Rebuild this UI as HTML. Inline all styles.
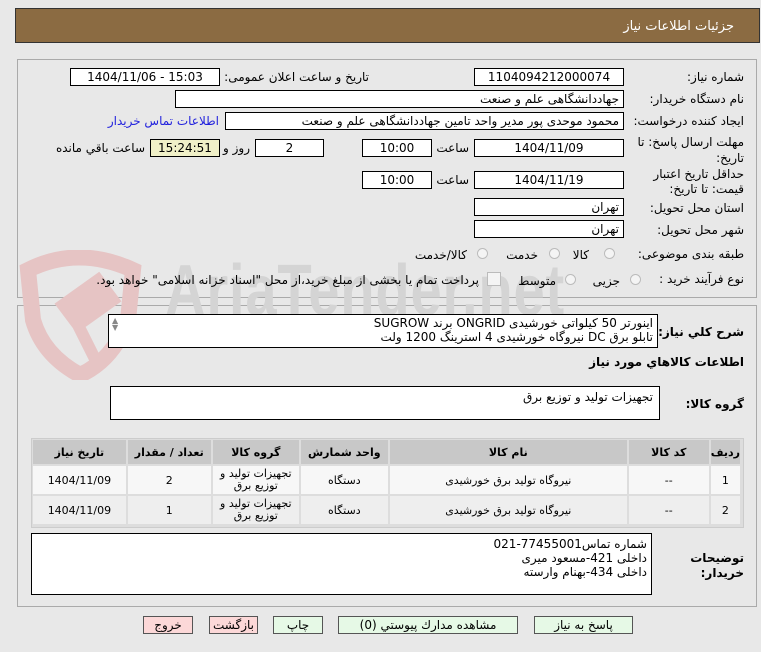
<!DOCTYPE html>
<html><head><meta charset="utf-8"><style>
body{margin:0;width:761px;height:652px;background:#e8e8e8;font-family:Tahoma,"DejaVu Sans","Liberation Sans",sans-serif;font-size:12px;color:#000;position:relative;overflow:hidden}
.a{position:absolute;white-space:nowrap}
.b{position:absolute;background:#fff;border:1px solid #000;box-sizing:border-box;text-align:center;line-height:16px}
.r{direction:rtl;text-align:right;padding-right:4px}
.l{position:absolute;direction:rtl;text-align:right;white-space:nowrap}
.rad{position:absolute;width:11px;height:11px;border:1px solid #bbb;border-radius:50%;background:#f4f4f4;box-sizing:border-box}
table{border-collapse:separate;border-spacing:2px}
td,th{text-align:center;padding:0}
.btn{position:absolute;top:616px;height:18px;border:1px solid #555;box-sizing:border-box;background:#e6f9e6;text-align:center;line-height:16px;font-size:12px}
</style></head><body>
<div class="a" style="left:15px;top:8px;width:745px;height:35px;background:#8b6b42;border:1px solid #333;box-sizing:border-box"></div>
<div class="l" style="right:27px;top:19px;color:#fff;font-size:13px">جزئیات اطلاعات نیاز</div>

<div class="a" style="left:17px;top:59px;width:740px;height:239px;border:1px solid #aaa;box-sizing:border-box"></div>
<div class="a" style="left:17px;top:305px;width:740px;height:302px;border:1px solid #aaa;box-sizing:border-box"></div>

<!-- watermark -->
<div class="a" style="left:0;top:240px;width:761px;height:140px;overflow:hidden">
<svg class="a" style="left:18px;top:10px" width="130" height="130"><path d="M10 20 Q60 -5 115 20 L110 70 Q95 110 62 125 Q25 105 15 70Z" fill="none" stroke="#e6c4c4" stroke-width="16"/><path d="M45 55 l35 -25 l15 20 l-35 25z M60 75 l20 40" stroke="#e6c4c4" stroke-width="12" fill="#e6c4c4"/></svg>
<div class="a" style="left:165px;top:10px;font-family:'Liberation Sans',sans-serif;font-size:72px;font-weight:bold;color:#d4d4d4;transform:scaleX(.78);transform-origin:left top;letter-spacing:1px">AriaTender.net</div>
</div>

<div class="l" style="right:17px;top:70px">شماره نیاز:</div>
<div class="b" style="left:474px;top:68px;width:150px;height:18px">1104094212000074</div>
<div class="l" style="right:392px;top:70px">تاریخ و ساعت اعلان عمومی:</div>
<div class="b" style="left:70px;top:68px;width:150px;height:18px">1404/11/06 - 15:03</div>

<div class="l" style="right:17px;top:92px">نام دستگاه خریدار:</div>
<div class="b r" style="left:175px;top:90px;width:449px;height:18px">جهاددانشگاهی علم و صنعت</div>

<div class="l" style="right:17px;top:114px">ایجاد کننده درخواست:</div>
<div class="b r" style="left:225px;top:112px;width:399px;height:18px">محمود موحدی پور مدیر واحد تامین جهاددانشگاهی علم و صنعت</div>
<div class="l" style="right:542px;top:114px;color:#2222dd">اطلاعات تماس خریدار</div>

<div class="l" style="right:17px;top:135px">مهلت ارسال پاسخ: تا</div>
<div class="l" style="right:17px;top:151px">تاریخ:</div>
<div class="b" style="left:474px;top:139px;width:150px;height:18px">1404/11/09</div>
<div class="l" style="right:292px;top:141px">ساعت</div>
<div class="b" style="left:362px;top:139px;width:70px;height:18px">10:00</div>
<div class="b" style="left:255px;top:139px;width:69px;height:18px">2</div>
<div class="l" style="right:511px;top:141px">روز و</div>
<div class="b" style="left:150px;top:139px;width:70px;height:18px;background:#f0f0c8">15:24:51</div>
<div class="l" style="right:616px;top:141px">ساعت باقي مانده</div>

<div class="l" style="right:17px;top:167px">حداقل تاریخ اعتبار</div>
<div class="l" style="right:17px;top:182px">قیمت: تا تاریخ:</div>
<div class="b" style="left:474px;top:171px;width:150px;height:18px">1404/11/19</div>
<div class="l" style="right:292px;top:173px">ساعت</div>
<div class="b" style="left:362px;top:171px;width:70px;height:18px">10:00</div>

<div class="l" style="right:17px;top:201px">استان محل تحویل:</div>
<div class="b r" style="left:474px;top:198px;width:150px;height:18px">تهران</div>
<div class="l" style="right:17px;top:223px">شهر محل تحویل:</div>
<div class="b r" style="left:474px;top:220px;width:150px;height:18px">تهران</div>

<div class="l" style="right:17px;top:247px">طبقه بندی موضوعی:</div>
<div class="rad" style="left:604px;top:248px"></div><div class="l" style="right:172px;top:248px">کالا</div>
<div class="rad" style="left:549px;top:248px"></div><div class="l" style="right:223px;top:248px">خدمت</div>
<div class="rad" style="left:477px;top:248px"></div><div class="l" style="right:294px;top:248px">کالا/خدمت</div>

<div class="l" style="right:17px;top:272px">نوع فرآیند خرید :</div>
<div class="rad" style="left:630px;top:274px"></div><div class="l" style="right:141px;top:274px">جزیی</div>
<div class="rad" style="left:565px;top:274px"></div><div class="l" style="right:205px;top:274px">متوسط</div>
<div class="a" style="left:487px;top:272px;width:12px;height:12px;border:1px solid #bbb;background:#f4f4f4"></div>
<div class="l" style="right:282px;top:273px">پرداخت تمام یا بخشی از مبلغ خرید،از محل "اسناد خزانه اسلامی" خواهد بود.</div>

<div class="l" style="right:17px;top:325px;font-weight:bold">شرح كلي نياز:</div>
<div class="b r" style="left:108px;top:314px;width:550px;height:34px;line-height:14px;padding-top:1px">اینورتر 50 کیلواتی خورشیدی ONGRID برند SUGROW<br>تابلو برق DC نیروگاه خورشیدی 4 استرینگ 1200 ولت</div>
<div class="a" style="left:112px;top:317px;color:#888;font-size:8px;line-height:7px">▲<br>▼</div>
<div class="l" style="right:17px;top:355px;font-weight:bold">اطلاعات كالاهاي مورد نياز</div>
<div class="l" style="right:17px;top:397px;font-weight:bold">گروه کالا:</div>
<div class="b r" style="left:110px;top:386px;width:550px;height:34px;line-height:14px;padding-top:3px;padding-right:6px">تجهیزات تولید و توزیع برق</div>

<div class="a" style="left:31px;top:438px;width:713px;height:90px;background:#ddd;border:1px solid #ccc;box-sizing:border-box">
<table style="width:711px;direction:rtl;font-size:11px;margin:-1px 0 0 -1px">
<tr style="background:#c8c8c8;height:24px;font-weight:bold"><th style="width:27px">ردیف</th><th style="width:80px">کد کالا</th><th style="width:237px">نام کالا</th><th style="width:87px">واحد شمارش</th><th style="width:86px">گروه کالا</th><th style="width:83px">تعداد / مقدار</th><th>تاریخ نیاز</th></tr>
<tr style="background:#f7f7f7;height:28px"><td>1</td><td>--</td><td>نیروگاه تولید برق خورشیدی</td><td>دستگاه</td><td style="line-height:12px">تجهیزات تولید و<br>توزیع برق</td><td>2</td><td>1404/11/09</td></tr>
<tr style="background:#eeeeee;height:28px"><td>2</td><td>--</td><td>نیروگاه تولید برق خورشیدی</td><td>دستگاه</td><td style="line-height:12px">تجهیزات تولید و<br>توزیع برق</td><td>1</td><td>1404/11/09</td></tr>
</table></div>

<div class="l" style="right:17px;top:551px;font-weight:bold">توضیحات</div>
<div class="l" style="right:17px;top:566px;font-weight:bold">خریدار:</div>
<div class="b r" style="left:31px;top:533px;width:621px;height:62px;line-height:14px;padding-top:3px">شماره تماس77455001-021<br>داخلی 421-مسعود میری<br>داخلی 434-بهنام وارسته</div>

<div class="btn" style="left:534px;width:99px">پاسخ به نياز</div>
<div class="btn" style="left:338px;width:180px">مشاهده مدارك پيوستي (0)</div>
<div class="btn" style="left:273px;width:50px">چاپ</div>
<div class="btn" style="left:209px;width:49px;background:#fcd8d8">بازگشت</div>
<div class="btn" style="left:143px;width:50px;background:#fcd8d8">خروج</div>
</body></html>
